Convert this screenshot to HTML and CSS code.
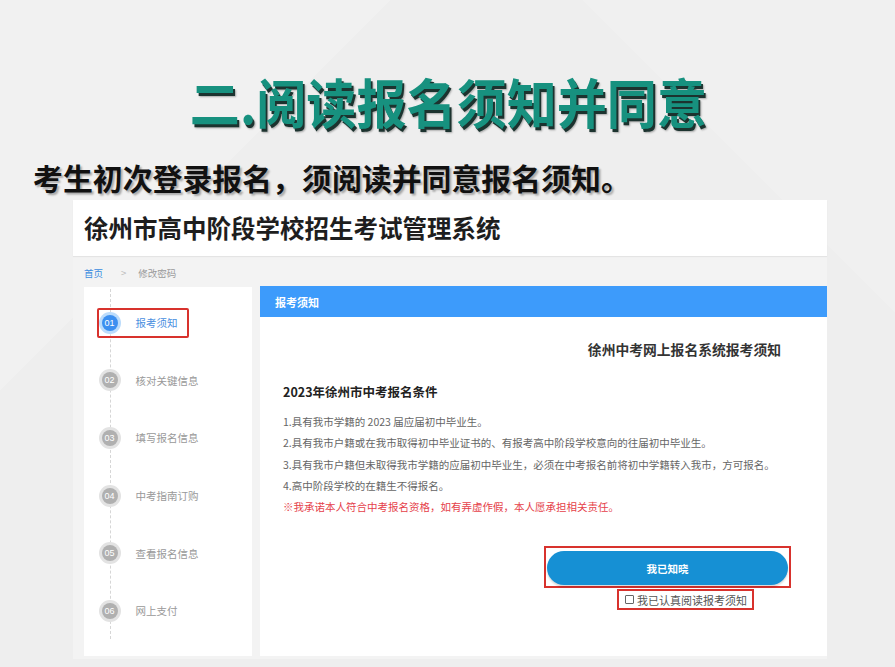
FILE: index.html
```html
<!DOCTYPE html>
<html lang="zh-CN">
<head>
<meta charset="utf-8">
<title>阅读报名须知并同意</title>
<link rel="stylesheet" href="styles.css">
</head>
<body>
<div class="page">
  <div class="hero">
    <h1 class="hero-title">二.阅读报名须知并同意</h1>
    <p class="hero-lead">考生初次登录报名，须阅读并同意报名须知。</p>
  </div>
  <div class="shot">
    <header class="sys-head">徐州市高中阶段学校招生考试管理系统</header>
    <div class="sys-body">
      <div class="crumb"><span class="crumb-home">首页</span><span class="crumb-sep">&gt;</span><span class="crumb-cur">修改密码</span></div>
      <div class="main">
        <aside class="steps">
          <div class="step active"><div class="step-in"><span class="dot">01</span><span class="step-txt">报考须知</span></div></div>
          <div class="step"><div class="step-in"><span class="dot">02</span><span class="step-txt">核对关键信息</span></div></div>
          <div class="step"><div class="step-in"><span class="dot">03</span><span class="step-txt">填写报名信息</span></div></div>
          <div class="step"><div class="step-in"><span class="dot">04</span><span class="step-txt">中考指南订购</span></div></div>
          <div class="step"><div class="step-in"><span class="dot">05</span><span class="step-txt">查看报名信息</span></div></div>
          <div class="step"><div class="step-in"><span class="dot">06</span><span class="step-txt">网上支付</span></div></div>
        </aside>
        <section class="notice">
          <div class="notice-bar">报考须知</div>
          <div class="notice-body">
            <h2 class="notice-title">徐州中考网上报名系统报考须知</h2>
            <h3 class="notice-sub">2023年徐州市中考报名条件</h3>
            <ul class="rules">
              <li>1.具有我市学籍的 2023 届应届初中毕业生。</li>
              <li>2.具有我市户籍或在我市取得初中毕业证书的、有报考高中阶段学校意向的往届初中毕业生。</li>
              <li>3.具有我市户籍但未取得我市学籍的应届初中毕业生，必须在中考报名前将初中学籍转入我市，方可报名。</li>
              <li>4.高中阶段学校的在籍生不得报名。</li>
              <li class="warn">※我承诺本人符合中考报名资格，如有弄虚作假，本人愿承担相关责任。</li>
            </ul>
            <div class="btn-wrap"><button class="btn" type="button">我已知晓</button></div>
            <label class="agree"><span class="box"></span>我已认真阅读报考须知</label>
          </div>
        </section>
      </div>
    </div>
  </div>
</div>
</body>
</html>
```
FILE: styles.css
```css
* { box-sizing: border-box; margin: 0; padding: 0; }
html, body { width: 895px; height: 667px; overflow: hidden; }
body {
  font-family: "Noto Sans CJK SC", "Noto Sans", sans-serif;
  background: #eeeeee;
  color: #333;
}
.page {
  width: 895px;
  height: 667px;
  background:
    linear-gradient(135deg, rgba(255,255,255,0.18) 0 25%, transparent 25% 100%),
    linear-gradient(225deg, rgba(255,255,255,0.14) 0 20%, transparent 20% 100%),
    #eeeeee;
}
.hero { padding-top: 74px; }
.hero-title {
  font-size: 53px;
  line-height: 54px;
  font-weight: 700;
  color: #17917f;
  text-align: center;
  text-shadow: 2px 3px 0 #1c332f, 3px 4px 2px rgba(0,0,0,0.3);
  transform: scaleX(0.945);
  padding-left: 2px;
}
.hero-lead {
  margin-top: 34px;
  padding-left: 33px;
  font-size: 29.9px;
  line-height: 30px;
  font-weight: 700;
  color: #111;
  text-shadow: 2px 2px 2px rgba(0,0,0,0.3);
}
.shot {
  margin: 8px 0 0 73px;
  width: 754px;
  background: #f3f3f3;
}
.sys-head {
  height: 56px;
  background: #fff;
  padding-left: 11px;
  font-size: 24.5px;
  line-height: 56px;
  font-weight: 700;
  color: #1e1e1e;
  box-shadow: 0 1px 1px rgba(0,0,0,0.06);
}
.sys-body { padding: 0 0 3px 11px; }
.crumb {
  height: 31px;
  font-size: 9.5px;
  line-height: 34px;
  color: #999;
  display: flex;
}
.crumb-home { color: #3b8de0; }
.crumb-sep { margin: 0 12px 0 18px; color: #bbb; }
.main { display: flex; gap: 8px; }
.steps {
  position: relative;
  width: 168px;
  height: 369px;
  background: #fff;
  padding-top: 7px;
}
.steps::before {
  content: "";
  position: absolute;
  left: 26px;
  top: 2px;
  bottom: 17px;
  border-left: 1px dashed #d6d6d6;
}
.step { height: 57.6px; display: flex; align-items: center; padding-left: 13px; position: relative; }
.step-in {
  display: flex;
  align-items: center;
  height: 30px;
  padding: 0 9px 0 2.5px;
  border: 2px solid transparent;
  border-radius: 2px;
}
.step.active .step-in { border-color: #d8322d; }
.dot {
  width: 16px;
  height: 16px;
  border-radius: 50%;
  background: #b0b0b0;
  box-shadow: 0 0 0 3px #e3e3e3;
  color: #fff;
  font-family: "Liberation Sans", Arial, sans-serif;
  font-size: 9px;
  line-height: 16px;
  text-align: center;
  flex: none;
}
.step.active .dot { background: #3c8ff0; box-shadow: 0 0 0 3px #bcdcfb; }
.step-txt { margin-left: 18px; font-size: 10.5px; color: #999; white-space: nowrap; }
.step.active .step-txt { color: #4a8fdf; }
.notice { width: 567px; height: 370px; background: #fff; margin-top: -1px; }
.notice-bar {
  height: 31px;
  background: #3d9bfb;
  color: #fff;
  font-size: 11px;
  font-weight: 700;
  line-height: 32px;
  padding-left: 15px;
}
.notice-body { padding: 22px 0 0 23px; }
.notice-title {
  font-size: 13.8px;
  line-height: 20px;
  font-weight: 700;
  color: #333;
  text-align: right;
  padding-right: 46px;
}
.notice-sub {
  margin-top: 24px;
  font-size: 12.5px;
  line-height: 18px;
  font-weight: 700;
  color: #222;
}
.rules {
  list-style: none;
  margin-top: 10px;
  font-size: 10.5px;
  line-height: 21.3px;
  color: #666;
  white-space: nowrap;
}
.rules .warn { color: #e5414a; }
.btn-wrap {
  margin: 29px 0 0 261px;
  width: 247px;
  height: 42px;
  border: 2px solid #d8322d;
  padding: 3px 1px 1px 1px;
}
.btn {
  display: block;
  width: 241px;
  height: 34px;
  border: none;
  border-radius: 17px;
  background: #1690d4;
  color: #fff;
  font-family: "Noto Sans CJK SC", sans-serif;
  font-size: 10.5px;
  font-weight: 700;
  box-shadow: 0 2px 2px rgba(0,0,0,0.15);
}
.agree {
  margin: 1px 0 0 334px;
  width: 137px;
  height: 21px;
  border: 2px solid #d8322d;
  display: flex;
  align-items: center;
  padding-left: 6px;
  font-size: 11px;
  color: #555;
  white-space: nowrap;
}
.box {
  width: 9px;
  height: 9px;
  border: 1px solid #666;
  border-radius: 1px;
  margin-right: 3px;
  flex: none;
}
```
